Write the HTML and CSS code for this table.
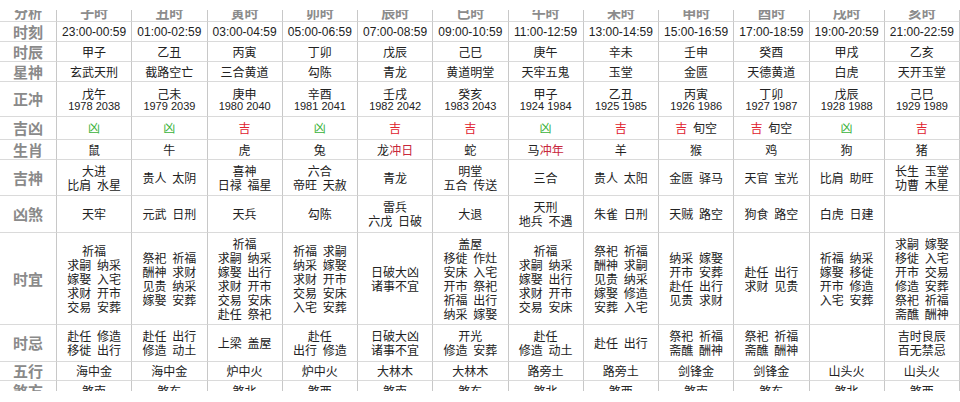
FILE: index.html
```html
<!DOCTYPE html>
<html lang="zh-CN">
<head>
<meta charset="utf-8">
<title>时辰吉凶</title>
<link rel="stylesheet" href="styles.css">
</head>
<body>
<div class="viewport">
<div class="almanac">
  <div class="c lab hd">分析</div>
  <div class="c hd">子时</div><div class="c hd">丑时</div><div class="c hd">寅时</div><div class="c hd">卯时</div><div class="c hd">辰时</div><div class="c hd">巳时</div><div class="c hd">午时</div><div class="c hd">未时</div><div class="c hd">申时</div><div class="c hd">酉时</div><div class="c hd">戌时</div><div class="c hd">亥时</div>

  <div class="c lab">时刻</div>
  <div class="c tm">23:00-00:59</div><div class="c tm">01:00-02:59</div><div class="c tm">03:00-04:59</div><div class="c tm">05:00-06:59</div><div class="c tm">07:00-08:59</div><div class="c tm">09:00-10:59</div><div class="c tm">11:00-12:59</div><div class="c tm">13:00-14:59</div><div class="c tm">15:00-16:59</div><div class="c tm">17:00-18:59</div><div class="c tm">19:00-20:59</div><div class="c tm">21:00-22:59</div>

  <div class="c lab">时辰</div>
  <div class="c">甲子</div><div class="c">乙丑</div><div class="c">丙寅</div><div class="c">丁卯</div><div class="c">戊辰</div><div class="c">己巳</div><div class="c">庚午</div><div class="c">辛未</div><div class="c">壬申</div><div class="c">癸酉</div><div class="c">甲戌</div><div class="c">乙亥</div>

  <div class="c lab">星神</div>
  <div class="c">玄武天刑</div><div class="c">截路空亡</div><div class="c">三合黄道</div><div class="c">勾陈</div><div class="c">青龙</div><div class="c">黄道明堂</div><div class="c">天牢五鬼</div><div class="c">玉堂</div><div class="c">金匮</div><div class="c">天德黄道</div><div class="c">白虎</div><div class="c">天开玉堂</div>

  <div class="c lab">正冲</div>
  <div class="c zc"><span>戊午</span><span class="yr">1978 2038</span></div>
  <div class="c zc"><span>己未</span><span class="yr">1979 2039</span></div>
  <div class="c zc"><span>庚申</span><span class="yr">1980 2040</span></div>
  <div class="c zc"><span>辛酉</span><span class="yr">1981 2041</span></div>
  <div class="c zc"><span>壬戌</span><span class="yr">1982 2042</span></div>
  <div class="c zc"><span>癸亥</span><span class="yr">1983 2043</span></div>
  <div class="c zc"><span>甲子</span><span class="yr">1924 1984</span></div>
  <div class="c zc"><span>乙丑</span><span class="yr">1925 1985</span></div>
  <div class="c zc"><span>丙寅</span><span class="yr">1926 1986</span></div>
  <div class="c zc"><span>丁卯</span><span class="yr">1927 1987</span></div>
  <div class="c zc"><span>戊辰</span><span class="yr">1928 1988</span></div>
  <div class="c zc"><span>己巳</span><span class="yr">1929 1989</span></div>

  <div class="c lab">吉凶</div>
  <div class="c"><span class="xiong">凶</span></div>
  <div class="c"><span class="xiong">凶</span></div>
  <div class="c"><span class="ji">吉</span></div>
  <div class="c"><span class="xiong">凶</span></div>
  <div class="c"><span class="ji">吉</span></div>
  <div class="c"><span class="ji">吉</span></div>
  <div class="c"><span class="xiong">凶</span></div>
  <div class="c"><span class="ji">吉</span></div>
  <div class="c"><span><span class="ji">吉</span> 旬空</span></div>
  <div class="c"><span><span class="ji">吉</span> 旬空</span></div>
  <div class="c"><span class="xiong">凶</span></div>
  <div class="c"><span class="ji">吉</span></div>

  <div class="c lab">生肖</div>
  <div class="c">鼠</div><div class="c">牛</div><div class="c">虎</div><div class="c">兔</div>
  <div class="c"><span>龙<span class="chong">冲日</span></span></div>
  <div class="c">蛇</div>
  <div class="c"><span>马<span class="chong">冲年</span></span></div>
  <div class="c">羊</div><div class="c">猴</div><div class="c">鸡</div><div class="c">狗</div><div class="c">猪</div>

  <div class="c lab">吉神</div>
  <div class="c"><span>大进</span><span>比肩 水星</span></div>
  <div class="c"><span>贵人 太阴</span></div>
  <div class="c"><span>喜神</span><span>日禄 福星</span></div>
  <div class="c"><span>六合</span><span>帝旺 天赦</span></div>
  <div class="c"><span>青龙</span></div>
  <div class="c"><span>明堂</span><span>五合 传送</span></div>
  <div class="c"><span>三合</span></div>
  <div class="c"><span>贵人 太阳</span></div>
  <div class="c"><span>金匮 驿马</span></div>
  <div class="c"><span>天官 宝光</span></div>
  <div class="c"><span>比肩 助旺</span></div>
  <div class="c"><span>长生 玉堂</span><span>功曹 木星</span></div>

  <div class="c lab">凶煞</div>
  <div class="c"><span>天牢</span></div>
  <div class="c"><span>元武 日刑</span></div>
  <div class="c"><span>天兵</span></div>
  <div class="c"><span>勾陈</span></div>
  <div class="c"><span>雷兵</span><span>六戊 日破</span></div>
  <div class="c"><span>大退</span></div>
  <div class="c"><span>天刑</span><span>地兵 不遇</span></div>
  <div class="c"><span>朱雀 日刑</span></div>
  <div class="c"><span>天贼 路空</span></div>
  <div class="c"><span>狗食 路空</span></div>
  <div class="c"><span>白虎 日建</span></div>
  <div class="c"></div>

  <div class="c lab">时宜</div>
  <div class="c"><span>祈福</span><span>求嗣 纳采</span><span>嫁娶 入宅</span><span>求财 开市</span><span>交易 安葬</span></div>
  <div class="c"><span>祭祀 祈福</span><span>酬神 求财</span><span>见贵 纳采</span><span>嫁娶 安葬</span></div>
  <div class="c"><span>祈福</span><span>求嗣 纳采</span><span>嫁娶 出行</span><span>求财 开市</span><span>交易 安床</span><span>赴任 祭祀</span></div>
  <div class="c"><span>祈福 求嗣</span><span>纳采 嫁娶</span><span>求财 开市</span><span>交易 安床</span><span>入宅 安葬</span></div>
  <div class="c"><span>日破大凶</span><span>诸事不宜</span></div>
  <div class="c"><span>盖屋</span><span>移徙 作灶</span><span>安床 入宅</span><span>开市 祭祀</span><span>祈福 出行</span><span>纳采 嫁娶</span></div>
  <div class="c"><span>祈福</span><span>求嗣 纳采</span><span>嫁娶 出行</span><span>求财 开市</span><span>交易 安床</span></div>
  <div class="c"><span>祭祀 祈福</span><span>酬神 求嗣</span><span>见贵 纳采</span><span>嫁娶 修造</span><span>安葬 入宅</span></div>
  <div class="c"><span>纳采 嫁娶</span><span>开市 安葬</span><span>赴任 出行</span><span>见贵 求财</span></div>
  <div class="c"><span>赴任 出行</span><span>求财 见贵</span></div>
  <div class="c"><span>祈福 纳采</span><span>嫁娶 移徙</span><span>开市 修造</span><span>入宅 安葬</span></div>
  <div class="c"><span>求嗣 嫁娶</span><span>移徙 入宅</span><span>开市 交易</span><span>修造 安葬</span><span>祭祀 祈福</span><span>斋醮 酬神</span></div>

  <div class="c lab">时忌</div>
  <div class="c"><span>赴任 修造</span><span>移徙 出行</span></div>
  <div class="c"><span>赴任 出行</span><span>修造 动土</span></div>
  <div class="c"><span>上梁 盖屋</span></div>
  <div class="c"><span>赴任</span><span>出行 修造</span></div>
  <div class="c"><span>日破大凶</span><span>诸事不宜</span></div>
  <div class="c"><span>开光</span><span>修造 安葬</span></div>
  <div class="c"><span>赴任</span><span>修造 动土</span></div>
  <div class="c"><span>赴任 出行</span></div>
  <div class="c"><span>祭祀 祈福</span><span>斋醮 酬神</span></div>
  <div class="c"><span>祭祀 祈福</span><span>斋醮 酬神</span></div>
  <div class="c"></div>
  <div class="c"><span>吉时良辰</span><span>百无禁忌</span></div>

  <div class="c lab">五行</div>
  <div class="c">海中金</div><div class="c">海中金</div><div class="c">炉中火</div><div class="c">炉中火</div><div class="c">大林木</div><div class="c">大林木</div><div class="c">路旁土</div><div class="c">路旁土</div><div class="c">剑锋金</div><div class="c">剑锋金</div><div class="c">山头火</div><div class="c">山头火</div>

  <div class="c lab">煞方</div>
  <div class="c">煞南</div><div class="c">煞东</div><div class="c">煞北</div><div class="c">煞西</div><div class="c">煞南</div><div class="c">煞东</div><div class="c">煞北</div><div class="c">煞西</div><div class="c">煞南</div><div class="c">煞东</div><div class="c">煞北</div><div class="c">煞西</div>
</div>
</div>
</body>
</html>
```

FILE: styles.css
```css
* {
  box-sizing: border-box;
}

html,
body {
  margin: 0;
  background: #ffffff;
  overflow: hidden;
}

body {
  font-family: "Noto Sans CJK SC", "Liberation Sans", sans-serif;
  color: #222222;
}

.viewport {
  margin-top: 10px;
  height: 381px;
  overflow: hidden;
}

.almanac {
  margin-top: -8px;
  display: grid;
  grid-template-columns: 57px repeat(12, 75.25px);
  grid-template-rows: 20px 20px 20px 20px 35px 23px 20px 36px 37px 92px 37px 19px 20px;
}

.c {
  display: flex;
  flex-direction: column;
  align-items: center;
  justify-content: center;
  border-right: 1px solid #c8c8c8;
  border-bottom: 1px solid #dadada;
  font-size: 12px;
  line-height: 14px;
  white-space: nowrap;
  word-spacing: 3px;
}

.lab {
  font-size: 15px;
  font-weight: 700;
  color: #8a8a8a;
  padding-right: 2px;
  padding-left: 2px;
}

.hd {
  font-size: 14px;
  font-weight: 700;
  color: #8c8c8c;
}

.tm {
  font-family: "Liberation Sans", sans-serif;
  font-size: 12px;
  word-spacing: 0;
}

.zc {
  line-height: 13px;
  padding-top: 1px;
}

.yr {
  font-family: "Liberation Sans", sans-serif;
  font-size: 11px;
  word-spacing: 0;
}

.ji {
  color: #e0222e;
}

.xiong {
  color: #3bb33b;
}

.chong {
  color: #c8283c;
}
```
